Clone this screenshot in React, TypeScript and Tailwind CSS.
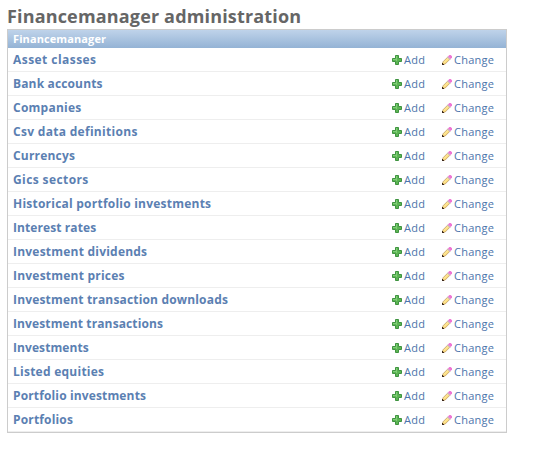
const rows: [string, string][] = [
  ['Asset classes', 'tracking-[0.45px]'],
  ['Bank accounts', 'tracking-[0.15px]'],
  ['Companies', 'tracking-[0.25px]'],
  ['Csv data definitions', 'tracking-[0.3px]'],
  ['Currencys', 'tracking-[0.2px]'],
  ['Gics sectors', 'tracking-[0.4px]'],
  ['Historical portfolio investments', 'tracking-[0.23px]'],
  ['Interest rates', 'tracking-[0.09px]'],
  ['Investment dividends', 'tracking-[0.22px]'],
  ['Investment prices', 'tracking-[0.22px]'],
  ['Investment transaction downloads', 'tracking-[0.17px]'],
  ['Investment transactions', 'tracking-[0.12px]'],
  ['Investments', 'tracking-[0.08px]'],
  ['Listed equities', 'tracking-[0.25px]'],
  ['Portfolio investments', 'tracking-[0.14px]'],
  ['Portfolios', 'tracking-[0.16px]'],
];

function PlusIcon() {
  return (
    <svg className="h-[10px] w-[10px] shrink-0" viewBox="0 0 10 10">
      <path d="M3.5 .5h3v3h3v3h-3v3h-3v-3h-3v-3h3z" fill="#5cb553" stroke="#3f9340" />
      <path d="M4.5 1v5M1 4.5h4" stroke="#7fce76" fill="none" />
    </svg>
  );
}

function PencilIcon() {
  return (
    <svg className="h-[10px] w-[10px] shrink-0" viewBox="0 0 10 10">
      <path d="M.9 6.9L5.9 1.9 8.1 4.1 3.1 9.1 .6 9.4z" fill="#fcdf82" stroke="#b58a4c" strokeWidth=".65" />
      <path d="M1.8 7.6L6.4 3" stroke="#fff0a8" strokeWidth=".8" />
      <path d="M5 2.3L6.1 1.2 8.8 3.9 7.7 5z" fill="#cdb6c6" />
      <path d="M6 1.4L7.4 0h1.3L10 1.3v1.3L8.6 4z" fill="#ee76d4" />
      <path d="M0 8h1v1h1v1H0z" fill="#3d2a1c" />
    </svg>
  );
}

export default function App() {
  return (
    <main className="h-[472px] w-[539px] bg-white pl-[7px] pt-1 font-['Lucida_Grande','Open_Sans',sans-serif]">
      <h1 className="h-[25px] whitespace-nowrap text-[18px] font-bold leading-[24px] tracking-[0.16px] text-[#666]">
        Financemanager administration
      </h1>
      <section className="w-[500px] border border-[#ccc]">
        <h2 className="h-[18px] bg-linear-to-b from-[#bfd3ea] to-[#94b3d5] pl-[5px] text-[11px] font-bold leading-[18px] tracking-[0.1px] text-white">
          Financemanager
        </h2>
        {rows.map(([name, tracking]) => (
          <div key={name} className="flex h-6 items-center border-b border-[#eee] pl-[5px] text-[#5b80b2]">
            <a className={`w-[379px] whitespace-nowrap text-[12px] font-bold leading-[23px] ${tracking}`}>
              {name}
            </a>
            <a className="flex w-[50px] items-center gap-[2px] text-[11px] leading-[23px] tracking-[0.25px] text-[#4c74ab]">
              <PlusIcon />
              Add
            </a>
            <a className="flex items-center gap-[2px] text-[11px] leading-[23px] tracking-[0.25px] text-[#4c74ab]">
              <PencilIcon />
              Change
            </a>
          </div>
        ))}
      </section>
    </main>
  );
}
